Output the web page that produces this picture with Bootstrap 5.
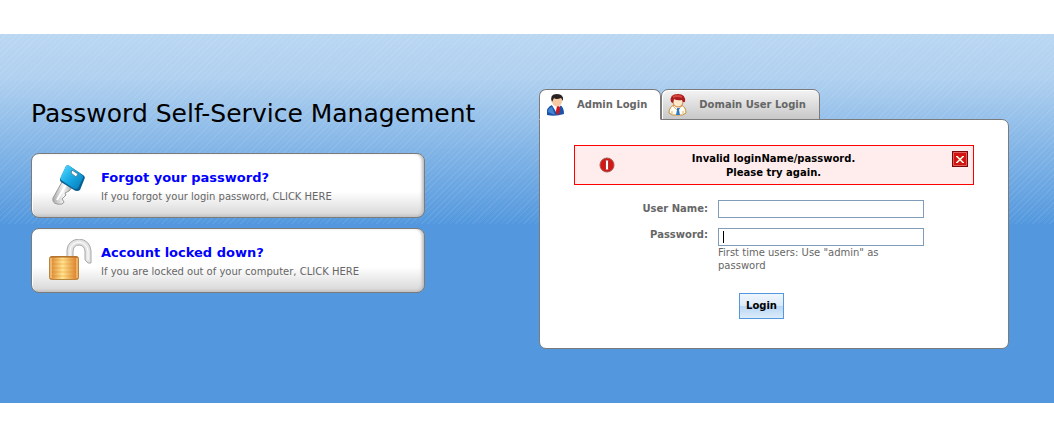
<!DOCTYPE html>
<html lang="en">
<head>
<meta charset="utf-8">
<meta name="viewport" content="width=device-width, initial-scale=1">
<title>Password Self-Service Management</title>
<link href="https://cdn.jsdelivr.net/npm/bootstrap@5.3.0/dist/css/bootstrap.min.css" rel="stylesheet">
<style>
body { font-family: "DejaVu Sans", Verdana, sans-serif; font-size: 10px; line-height: 14px; color: #666; background: #fff; }
.band { margin-top: 34px; padding: 55px 45px 54px 31px; position: relative;
  background: linear-gradient(#bad7f2 0, #afd0ef 45px, #5398de 190px); }
.band::before { content: ""; position: absolute; inset: 0 0 auto 0; height: 190px;
  background: repeating-linear-gradient(135deg, rgba(255,255,255,.08) 0 1px, transparent 1px 4px); }
.band > * { position: relative; }
h1 { font-size: 25px; line-height: 32px; color: #000; margin: 9px 0 23px; }
.option { max-width: 394px; height: 65px; padding: 0 16px; border: 1px solid #7b7b7b; border-radius: 8px; margin-bottom: 10px;
  background: linear-gradient(#fff 60%, #dcdcdc 94%, #c4c4c4); box-shadow: inset -3px 0 3px -1px #bbb, inset 1px 1px 0 #fff; color: #666; }
.option-text { margin-left: 9px; padding-top: 1px; }
.option-title { font-size: 13px; line-height: 18px; color: #00f; }
.option-note { padding-top: 3px; }
.option svg { width: 44px; height: 44px; }
.login { width: 470px; }
.tab-btn { height: 31px; border: 1px solid #7b7b7b; border-radius: 7px 7px 0 0; padding: 0 13px 0 6px; font-weight: bold; font-size: 10px; color: #666;
  background: linear-gradient(#f3f3f3, #c8c8c8); box-shadow: inset 1px 1px 0 #fff; }
.tab-btn.active { background: #fff; border-bottom-color: #fff; box-shadow: none; }
.tab-btn svg { width: 19px; height: 24px; }
.tab-btn span { margin-left: 12px; padding-top: 1px; }
.tabs { margin-bottom: -1px; position: relative; z-index: 1; }
.panel { background: #fff; border: 1px solid #7b7b7b; border-radius: 0 7px 7px 7px; padding: 25px 34px 29px; }
.error-box { background: #ffecec; border: 1px solid #f00; height: 40px; color: #000; font-weight: bold; padding: 0 5px 0 24px; margin-bottom: 15px; }
.error-text { margin-right: 20px; padding-top: 1px; }
.close-btn { width: 16px; height: 16px; margin-top: 5px; }
.field-row { gap: 10px; margin-bottom: 10px; }
.field-label { width: 134px; font-weight: bold; line-height: 14px; }
.field-box { width: 206px; height: 18px; border: 1px solid #7f9db9; padding: 0 4px; font-size: 10px; background: #fff; outline: 0; }
#pass:focus:placeholder-shown { caret-color: transparent; background: linear-gradient(#000, #000) 4px 2px / 1px 12px no-repeat #fff; }
.hint { width: 206px; line-height: 13px; }
.login-btn { width: 45px; height: 26px; margin: 21px 0 0 165px; border: 1px solid #5398de; font-size: 10px; font-weight: bold; color: #000;
  background: linear-gradient(#eff6fd 0, #dbe9f8 50%, #b9d6f3 52%, #dcecfa 100%); }
@media (max-width: 991px) { .login { width: 100%; max-width: 470px; } }
</style>
</head>
<body>
<main class="band d-flex flex-wrap flex-lg-nowrap justify-content-between align-items-start">
  <section class="flex-grow-1">
    <h1 class="fw-normal text-nowrap">Password Self-Service Management</h1>
    <a href="#" class="option d-flex align-items-center text-decoration-none">
      <svg viewBox="0 0 44 44" aria-hidden="true">
        <defs>
          <linearGradient id="kb" x1="0" y1="0" x2="1" y2="1"><stop offset="0" stop-color="#5adcff"/><stop offset=".5" stop-color="#16a9e4"/><stop offset="1" stop-color="#0878b8"/></linearGradient>
          <linearGradient id="ks"><stop offset="0" stop-color="#aaa"/><stop offset=".5" stop-color="#f4f4f4"/><stop offset="1" stop-color="#a0a0a0"/></linearGradient>
        </defs>
        <path d="M14 18 5 34Q4 39 9 40Q15 41 16 38L14 35L18 31L17 29L21 27L26 21Z" fill="url(#ks)" stroke="#999"/>
        <path d="M18 21 9 36" stroke="#fff" stroke-width="2"/>
        <path d="M18 2Q20 0 23 3L35 11Q38 13 36 16L32 26Q29 28 26 26L13 18Q11 16 13 13Z" fill="#075f91"/>
        <path d="M18 2Q20 0 23 3L34 11Q36 13 34 16L30 24Q28 26 25 24L13 16Q12 14 13 12Z" fill="url(#kb)"/>
        <path d="M24 6 30 10 28 13 23 9Z" fill="#fff" stroke="#54849d"/>
      </svg>
      <span class="option-text"><strong class="option-title d-block">Forgot your password?</strong><span class="option-note d-block">If you forgot your login password, CLICK HERE</span></span>
    </a>
    <a href="#" class="option d-flex align-items-center text-decoration-none mb-0">
      <svg viewBox="0 0 44 44" aria-hidden="true">
        <defs>
          <linearGradient id="lb"><stop offset="0" stop-color="#db812c"/><stop offset=".45" stop-color="#ffe391"/><stop offset="1" stop-color="#d97622"/></linearGradient>
          <linearGradient id="lc"><stop offset="0" stop-color="#d98222"/><stop offset=".5" stop-color="#f7b64a"/><stop offset="1" stop-color="#d98222"/></linearGradient>
        </defs>
        <path d="M22 17V11Q22 3 31 3Q40 3 40 12V21L43 24V12" fill="none" stroke="none"/>
        <path d="M19 18V11Q20 1 31 0Q42 1 43 12V24H40L37 21V12Q36 6 31 6Q25 6 25 13V18Z" fill="#e4e4e4" stroke="#a8a8a8"/>
        <path d="M22 17V11Q23 4 31 3Q39 4 40 12V21" fill="none" stroke="#fff"/>
        <rect x="1.500" y="17.500" width="29" height="23" rx="2" fill="url(#lb)" stroke="#b8863c"/>
        <path d="M3 21H29M3 25H29M3 29H29M3 33H29M3 37H29" stroke="url(#lc)" opacity=".75"/>
        <path d="M3 18H29" stroke="#ad651a"/><path d="M3 19V39M29 19V39" stroke="#ffe0a8"/>
      </svg>
      <span class="option-text"><strong class="option-title d-block">Account locked down?</strong><span class="option-note d-block">If you are locked out of your computer, CLICK HERE</span></span>
    </a>
  </section>
  <section class="login flex-shrink-0">
    <div class="tabs d-flex">
      <button type="button" class="tab-btn active d-flex align-items-center">
        <svg viewBox="0 0 19 24" aria-hidden="true">
          <path d="M1 22Q0 14 6 12L10 17 14 12Q18 14 18 21Q9 24 1 22Z" fill="#1c53a8"/>
          <path d="M2 19Q2 15 6 14L9 22" fill="#4285d2"/>
          <path d="M6 12 10 19 15 12 12 11H8Z" fill="#fff"/><path d="M11 13H13L14 15 13 21 11 22 10 18Z" fill="#d51718"/>
          <ellipse cx="11" cy="8" rx="5" ry="5.500" fill="#f4c9a4"/>
          <path d="M6 9Q3 1 11 1Q18 1 17 8L15 5Q10 7 8 5Z" fill="#292220"/>
        </svg>
        <span>Admin Login</span>
      </button>
      <button type="button" class="tab-btn d-flex align-items-center">
        <svg viewBox="0 0 19 24" aria-hidden="true">
          <path d="M1 20Q1 14 6 12H13Q18 14 18 20Q15 23 10 22Q4 23 1 20Z" fill="#fffdf4" stroke="#c98f35"/>
          <path d="M5 13 9 17 14 13M4 18V21M15 18V21" fill="none" stroke="#dbb36b"/>
          <path d="M9 15H12L11 17 12 22H8L9 17Z" fill="#2e78c8"/>
          <ellipse cx="10" cy="9" rx="5" ry="5" fill="#ffe7c9" stroke="#ca8147"/>
          <path d="M3 9Q1 1 10 1Q18 1 17 9L15 9 14 7Q9 8 6 6L5 10Z" fill="#a91d20"/><path d="M5 4Q9 2 14 4" stroke="#d8483d" stroke-width="2" fill="none"/>
        </svg>
        <span>Domain User Login</span>
      </button>
    </div>
    <form class="panel" onsubmit="return false">
      <div class="error-box d-flex align-items-center" role="alert">
        <svg width="16" height="16" viewBox="0 0 16 16" aria-hidden="true"><circle cx="8" cy="8" r="7" fill="#d81414" stroke="#a05a50"/><rect x="6.500" y="3" width="3" height="10" rx="1" fill="#fff" stroke="#a33"/></svg>
        <div class="error-text flex-grow-1 text-center">Invalid loginName/password.<br>Please try again.</div>
        <button type="button" class="close-btn border-0 p-0 bg-transparent d-flex align-self-start" aria-label="Close">
          <svg width="16" height="16" viewBox="0 0 16 16" aria-hidden="true"><path d="M0 0H16V16H0Z" fill="#7b0808"/><path d="M1.500 1.500H14.500V14.500H1.500Z" fill="#d31212" stroke="#e0605a"/><path d="M4 5.500H6M10 5.500H12M4 11.500H6M10 11.500H12" stroke="#fffbe0"/><path d="M5 5.500 11 11.500M11 5.500 5 11.500" stroke="#fffbe0" stroke-width="1.700"/></svg>
        </button>
      </div>
      <div class="field-row d-flex align-items-center">
        <label class="field-label text-end" for="user">User Name:</label>
        <input id="user" class="field-box" type="text">
      </div>
      <div class="field-row d-flex align-items-start mb-0">
        <label class="field-label text-end" for="pass">Password:</label>
        <div><input id="pass" class="field-box d-block" type="password" placeholder=" " autofocus>
          <div class="hint">First time users: Use "admin" as password</div></div>
      </div>
      <button type="submit" class="login-btn p-0 d-block">Login</button>
    </form>
  </section>
</main>
<script src="https://cdn.jsdelivr.net/npm/bootstrap@5.3.0/dist/js/bootstrap.bundle.min.js"></script>
</body>
</html>
